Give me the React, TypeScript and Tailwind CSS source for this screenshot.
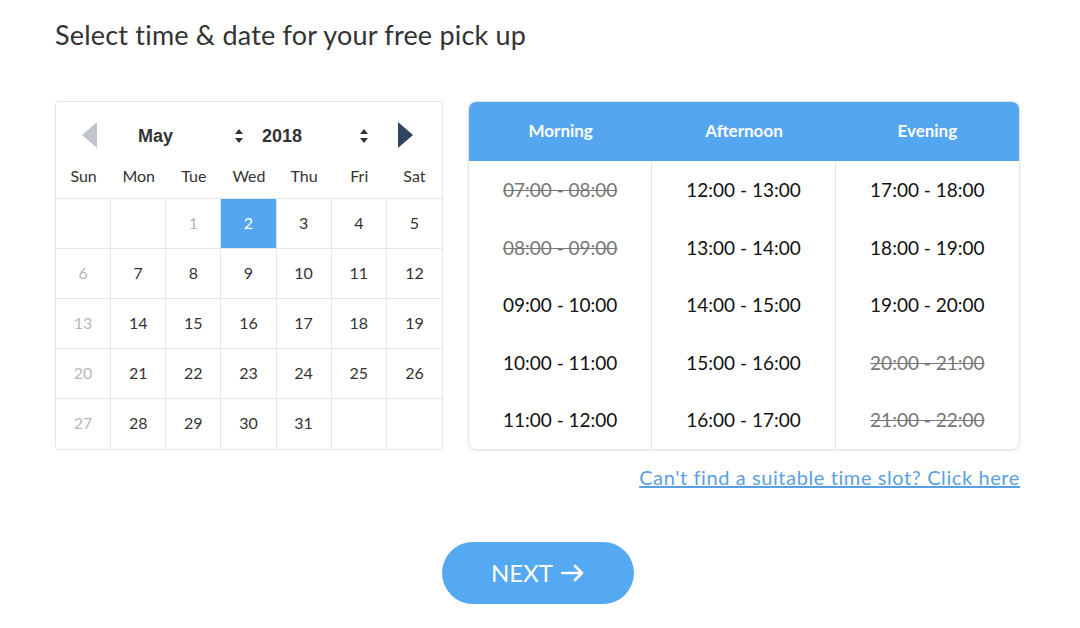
import React from "react";

const days: (number | null)[] = [
  null, null, 1, 2, 3, 4, 5,
  6, 7, 8, 9, 10, 11, 12,
  13, 14, 15, 16, 17, 18, 19,
  20, 21, 22, 23, 24, 25, 26,
  27, 28, 29, 30, 31, null, null,
];

const slots: { t: string; off?: boolean }[][] = [
  [
    { t: "07:00 - 08:00", off: true },
    { t: "08:00 - 09:00", off: true },
    { t: "09:00 - 10:00" },
    { t: "10:00 - 11:00" },
    { t: "11:00 - 12:00" },
  ],
  [
    { t: "12:00 - 13:00" },
    { t: "13:00 - 14:00" },
    { t: "14:00 - 15:00" },
    { t: "15:00 - 16:00" },
    { t: "16:00 - 17:00" },
  ],
  [
    { t: "17:00 - 18:00" },
    { t: "18:00 - 19:00" },
    { t: "19:00 - 20:00" },
    { t: "20:00 - 21:00", off: true },
    { t: "21:00 - 22:00", off: true },
  ],
];

function UpDown() {
  return (
    <svg width="10" height="16" viewBox="0 0 10 16">
      <path d="M5 1 L9 6 L1 6 Z" fill="#333" />
      <path d="M5 15 L9 10 L1 10 Z" fill="#333" />
    </svg>
  );
}

export default function App() {
  return (
    <div
      className="w-[1080px] h-[628px] bg-white text-[#333] overflow-hidden"
      style={{ fontFamily: "Lato, 'Noto Sans', sans-serif" }}
    >
      <div className="pl-[55px] pt-[19px]">
        <h1 className="text-[27px] leading-[32px] text-[#333] tracking-[0.2px]">
          Select time &amp; date for your free pick up
        </h1>
      </div>

      <div className="flex pl-[55px] pt-[50px] gap-[25px]">
        {/* Calendar */}
        <div className="w-[388px] h-[349px] border border-[#e6e6e6] rounded-[3px] flex flex-col">
          <div className="h-[58px] flex items-center relative">
            <div className="absolute left-[26px] top-[20px]">
              <svg width="16" height="26" viewBox="0 0 16 26">
                <path d="M15 0 L15 26 L0 13 Z" fill="#c1c4c9" />
              </svg>
            </div>
            <div
              className="absolute left-[82px] top-[23px] text-[18px] font-bold leading-[22px] text-[#333]"
              style={{ fontFamily: "'Liberation Sans', Arial, sans-serif" }}
            >
              May
            </div>
            <div className="absolute left-[178px] top-[26px]">
              <UpDown />
            </div>
            <div
              className="absolute left-[206px] top-[23px] text-[18px] font-bold leading-[22px] text-[#333]"
              style={{ fontFamily: "'Liberation Sans', Arial, sans-serif" }}
            >
              2018
            </div>
            <div className="absolute left-[303px] top-[26px]">
              <UpDown />
            </div>
            <div className="absolute left-[341px] top-[20px]">
              <svg width="16" height="26" viewBox="0 0 16 26">
                <path d="M1 0 L1 26 L16 13 Z" fill="#2f4462" />
              </svg>
            </div>
          </div>
          <div className="grid grid-cols-7 h-[39px] items-center border-b border-[#e6e6e6]">
            {["Sun", "Mon", "Tue", "Wed", "Thu", "Fri", "Sat"].map((d) => (
              <div key={d} className="text-center text-[16px] text-[#333] pb-[6px]">
                {d}
              </div>
            ))}
          </div>
          <div className="grid grid-cols-7 grid-rows-5 flex-1">
            {days.map((d, i) => {
              const col = i % 7;
              const row = Math.floor(i / 7);
              const sel = d === 2;
              const muted = col === 0 || d === 1;
              return (
                <div
                  key={i}
                  className={[
                    "flex items-center justify-center text-[16px] pb-[2px]",
                    col < 6 ? "border-r border-[#e6e6e6]" : "",
                    row < 4 ? "border-b border-[#e6e6e6]" : "",
                    sel ? "bg-[#54a6f0] text-white" : muted ? "text-[#b8b8b8]" : "text-[#333]",
                  ].join(" ")}
                >
                  {d ?? ""}
                </div>
              );
            })}
          </div>
        </div>

        {/* Time slots */}
        <div className="flex flex-col items-end">
          <div className="w-[552px] h-[349px] border border-[#e3e3e3] rounded-[8px] shadow-[0_1px_3px_rgba(0,0,0,0.08)] overflow-hidden flex flex-col">
            <div className="h-[60px] bg-[#54a6f0] grid grid-cols-3 items-center text-white text-[17px] font-bold">
              <div className="text-center pb-[2px]">Morning</div>
              <div className="text-center pb-[2px]">Afternoon</div>
              <div className="text-center pb-[2px]">Evening</div>
            </div>
            <div className="grid grid-cols-3 flex-1 pt-[1px]">
              {slots.map((col, ci) => (
                <div
                  key={ci}
                  className={
                    "flex flex-col " + (ci < 2 ? "border-r border-[#e6e6e6]" : "")
                  }
                >
                  {col.map((s) => (
                    <div
                      key={s.t}
                      className={
                        "h-[57.5px] flex items-center justify-center text-[19px] " +
                        (s.off ? "line-through text-[#777]" : "text-[#111]")
                      }
                    >
                      {s.t}
                    </div>
                  ))}
                </div>
              ))}
            </div>
          </div>
          <a
            href="#"
            className="mt-[15px] text-[20px] leading-[24px] text-[#5b9fe3] underline tracking-[0.6px]"
          >
            Can't find a suitable time slot? Click here
          </a>
        </div>
      </div>

      <div className="flex justify-center pt-[53px]">
        <button className="w-[192px] h-[62px] rounded-full bg-[#55a8f2] text-white text-[24px] flex items-center justify-center gap-[8px] ml-[-4px]">
          <span>NEXT</span>
          <svg width="24" height="18" viewBox="0 0 24 18">
            <path
              d="M1 9 H21 M14 2 L21 9 L14 16"
              stroke="white"
              strokeWidth="2.6"
              fill="none"
              strokeLinecap="round"
              strokeLinejoin="round"
            />
          </svg>
        </button>
      </div>
    </div>
  );
}
